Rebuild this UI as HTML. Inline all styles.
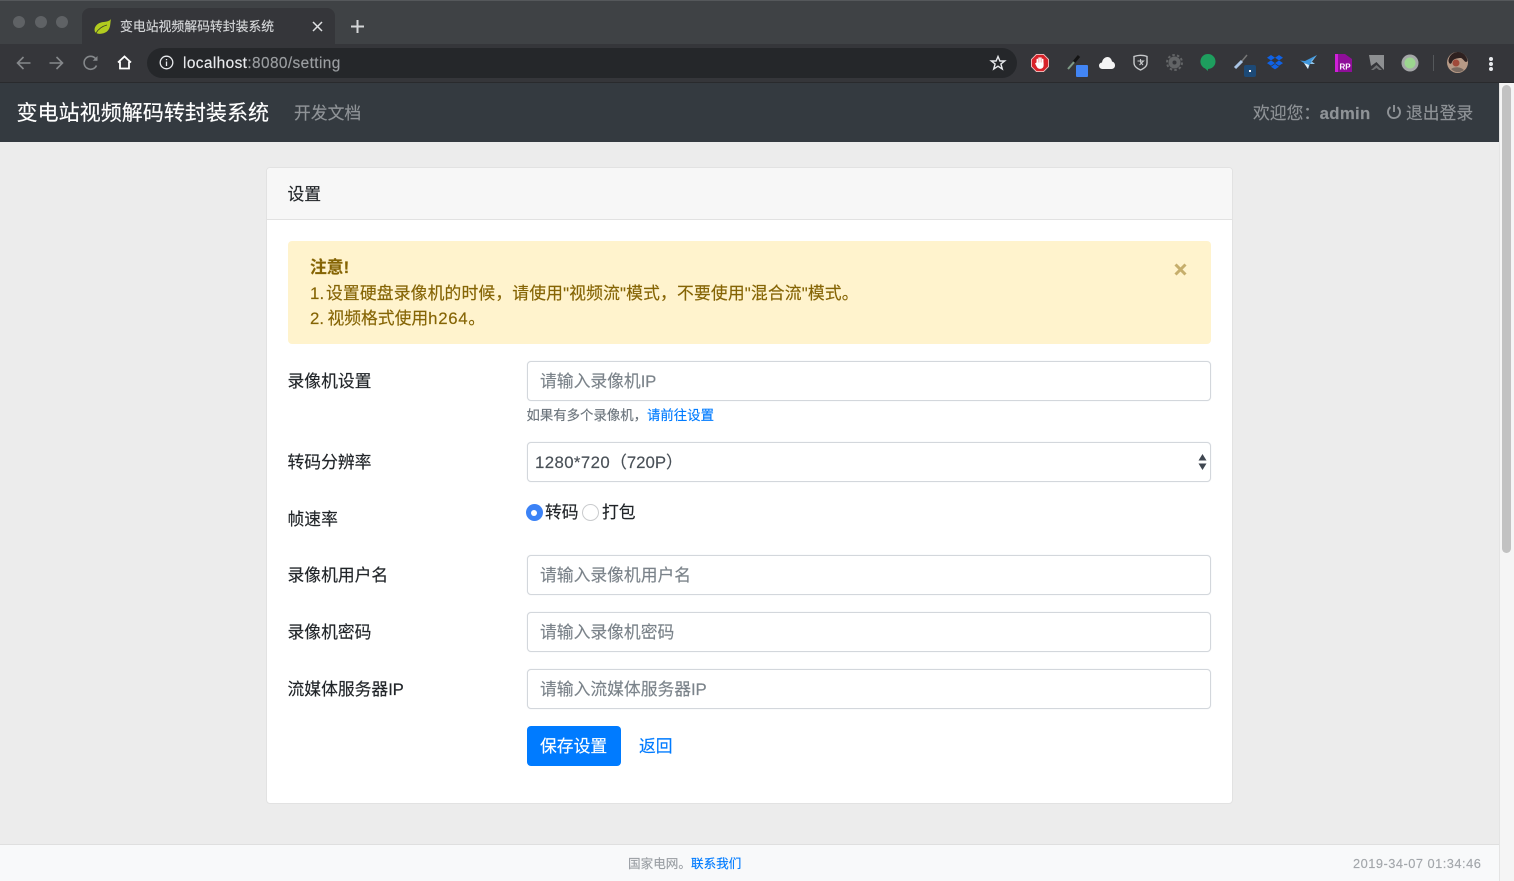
<!DOCTYPE html>
<html lang="zh">
<head>
<meta charset="utf-8">
<title>变电站视频解码转封装系统</title>
<style>
html,body{margin:0;padding:0;width:1514px;height:881px;overflow:hidden;background:#ececec}
body{position:relative;font-family:"Liberation Sans","Noto Sans CJK SC",sans-serif;color:#212529}
.a{position:absolute}
.t{position:absolute;white-space:nowrap;line-height:24px;font-size:16.8px;margin-top:1px;-webkit-text-stroke:.15px currentColor}
.box{position:absolute;left:527px;width:682px;height:38px;background:#fff;border:1px solid #d3d7dc;border-radius:4px;box-shadow:0 0 1px #dfe2e6}
.ph{color:#7b838a;left:540px}
.ip{font-size:16.8px;letter-spacing:-.2px}
svg{position:absolute;overflow:visible}
</style>
</head>
<body>
<!-- browser chrome -->
<div class="a" style="left:0;top:0;width:1514px;height:44px;background:#3f4245;border-top:1px solid #55585b;box-sizing:border-box"></div>
<div class="a" style="left:13px;top:16px;width:12px;height:12px;border-radius:50%;background:#5f6265"></div>
<div class="a" style="left:35px;top:16px;width:12px;height:12px;border-radius:50%;background:#5f6265"></div>
<div class="a" style="left:56px;top:16px;width:12px;height:12px;border-radius:50%;background:#5f6265"></div>
<div class="a" style="left:82px;top:8px;width:253px;height:36px;background:#35363a;border-radius:8px 8px 0 0"></div>
<svg style="left:94px;top:18px" width="18" height="17" viewBox="0 0 18 17"><path d="M17 1C16 5 17 10 13 13.500C9 16.500 3 16.500 1 14C-.5 10 2 6 7 4.500C11 3.500 15 4 17 1Z" fill="#b2cc1f"/><path d="M2 15C5 10 9 8 13 7" stroke="#3a3f2a" stroke-width=".8" fill="none"/></svg>
<div class="t" style="left:120px;top:14px;font-size:12.85px;color:#d5d7d9">变电站视频解码转封装系统</div>
<svg style="left:312px;top:21px" width="11" height="11"><path d="M1 1L10 10M10 1L1 10" stroke="#dfe1e3" stroke-width="1.500"/></svg>
<svg style="left:351px;top:20px" width="13" height="13"><path d="M6.500 0V13M0 6.500H13" stroke="#d4d6d8" stroke-width="2"/></svg>

<div class="a" style="left:0;top:44px;width:1514px;height:39px;background:#35363a;border-bottom:1px solid #292a2d;box-sizing:border-box"></div>
<svg style="left:16px;top:56px" width="15" height="14" fill="none" stroke="#85888b" stroke-width="1.600"><path d="M14.500 7H1.500M7.500 1L1.500 7L7.500 13"/></svg>
<svg style="left:49px;top:56px" width="15" height="14" fill="none" stroke="#85888b" stroke-width="1.600"><path d="M.5 7H13.500M7.500 1L13.500 7L7.500 13"/></svg>
<svg style="left:83px;top:55px" width="16" height="16" fill="none" stroke="#85888b" stroke-width="1.600"><path d="M13.500 10.500A6.500 6.500 0 1 1 12.500 3.500L14 5"/><path d="M14.500 1V5.800H9.700" fill="#85888b" stroke="none"/></svg>
<svg style="left:117px;top:55px" width="15" height="15" fill="none" stroke="#fff" stroke-width="1.800"><path d="M1 7.500L7.500 1.500L14 7.500M3 6.500V13.500H12V6.500"/></svg>
<div class="a" style="left:147px;top:48px;width:870px;height:30px;border-radius:15px;background:#25272a"></div>
<svg style="left:159px;top:55px" width="15" height="15" fill="none" stroke="#e8eaed" stroke-width="1.300"><circle cx="7.500" cy="7.500" r="6.300"/><path d="M7.500 6.500V11M7.500 4V5.200"/></svg>
<div class="t" style="left:183px;top:51px;font-size:15.4px;letter-spacing:.4px;color:#e8eaed">localhost<span style="color:#9b9ea1">:8080/setting</span></div>
<svg style="left:990px;top:55px" width="16" height="16" fill="none" stroke="#e8eaed" stroke-width="1.400"><path d="M8 1.500L9.900 6H14.700L10.900 9L12.300 14L8 11.200L3.700 14L5.100 9L1.300 6H6.100Z"/></svg>

<!-- extensions -->
<svg style="left:1031px;top:54px" width="18" height="18" viewBox="0 0 20 20"><path d="M6 .5H14L19.500 6V14L14 19.500H6L.5 14V6Z" fill="#d8232a" stroke="#f0c4c4"/><path d="M7 10V6M9 10V4.500M11 10V4.500M13 10V6" stroke="#fff" stroke-width="1.700" stroke-linecap="round"/><path d="M6 9.500H14V12.500C14 15 12.500 16.500 10 16.500C8 16.500 6.800 15.500 6 13.500L4.500 10.500Z" fill="#fff"/></svg>
<svg style="left:1066px;top:55px" width="24" height="24"><path d="M2 14L9 6" stroke="#7e9a86" stroke-width="2"/><path d="M8 7L13 1" stroke="#141414" stroke-width="3"/><rect x="10" y="10" width="12" height="12" rx="1" fill="#4285f4"/></svg>
<svg style="left:1099px;top:57px" width="16" height="12"><path d="M3.500 12C1 12 0 10 0 8.500C0 7 1.500 5.500 3 5.500C3.500 2 6 0 8.500 0C11 0 12.500 2 13 4.500C15 5 16 6.500 16 8.500C16 10.500 14.500 12 12.500 12Z" fill="#f4f4f4"/></svg>
<svg style="left:1133px;top:54px" width="15" height="17" fill="none" stroke="#c8cacc" stroke-width="1.400"><path d="M1 2.500C5 1 10 1 14 2.500V9C14 12 11 14.500 7.500 16C4 14.500 1 12 1 9Z"/><path d="M4.500 7H10.500L6.500 11M7.500 5V8L10 11" stroke-width="1.100"/></svg>
<svg style="left:1166px;top:54px" width="17" height="17"><circle cx="8.500" cy="8.500" r="6" fill="#626466"/><circle cx="8.500" cy="8.500" r="7.500" fill="none" stroke="#626466" stroke-width="2" stroke-dasharray="2.500 2.200"/><circle cx="8.500" cy="8.500" r="2" fill="#35363a"/></svg>
<svg style="left:1200px;top:54px" width="16" height="18"><path d="M8 0A7.500 7.500 0 0 1 8 15L8 17L5 14.400A7.500 7.500 0 0 1 8 0Z" fill="#1e9e5e"/></svg>
<svg style="left:1233px;top:55px" width="24" height="24"><path d="M2 13L9 6" stroke="#a9c4e4" stroke-width="3"/><path d="M9 6L14 0" stroke="#777" stroke-width="1.500"/><rect x="11" y="10" width="12" height="12" rx="2" fill="#1d4a77"/><rect x="16" y="15" width="2" height="2" fill="#fff"/></svg>
<svg style="left:1267px;top:55px" width="16" height="15" fill="#0f62e6"><path d="M4 0L8 2.700L4 5.400L0 2.700ZM12 0L16 2.700L12 5.400L8 2.700ZM4 5.400L8 8.100L4 10.800L0 8.100ZM12 5.400L16 8.100L12 10.800L8 8.100ZM4 11.700L8 9L12 11.700L8 14.400Z"/></svg>
<svg style="left:1300px;top:55px" width="18" height="15"><path d="M17 0L9 4L5 6L0 5.500L4 8L8 14L10 9Z" fill="#3f96dc"/><path d="M17 0L10 9L15 9L11 6Z" fill="#8fc6ec"/><path d="M4 8L8 14L9 10Z" fill="#e8f0f4"/></svg>
<svg style="left:1335px;top:54px" width="17" height="18"><path d="M0 0H10L17 5V18H0Z" fill="#8f0f99"/><rect width="3" height="18" fill="#d020d8"/><text x="4.500" y="15.500" font-family="Liberation Sans" font-size="8" font-weight="700" fill="#fff">RP</text></svg>
<svg style="left:1369px;top:55px" width="15" height="15"><path d="M0 0H15V15L7.500 7L2 11Z" fill="#8d8f91"/><path d="M2 15L7.500 10L13 15H10L7.500 13L4.500 15Z" fill="#6f7173"/></svg>
<svg style="left:1401px;top:54px" width="18" height="18"><circle cx="9" cy="9" r="8.500" fill="#a5a7a8"/><circle cx="9" cy="9" r="5.500" fill="#9cd68f"/></svg>
<div class="a" style="left:1433px;top:55px;width:1px;height:16px;background:#55585b"></div>
<svg style="left:1447px;top:52px" width="21" height="21"><circle cx="10.500" cy="10.500" r="10.500" fill="#b79a86"/><path d="M1.500 9C2 2 8 0 11 0C16 0 20 4 20.500 9C18 12 17 7 14 6C10 6 6 7 5 10C4 13 2 12 1.500 9Z" fill="#2e2120"/><circle cx="9" cy="11" r="3.500" fill="#a04a3a"/><path d="M4 17C8 14 14 15 17 18C13 21 8 21 4 17Z" fill="#7a6a60"/></svg>
<div class="a" style="left:1489px;top:57px;width:4px;height:4px;border-radius:50%;background:#e8eaed"></div>
<div class="a" style="left:1489px;top:62px;width:4px;height:4px;border-radius:50%;background:#e8eaed"></div>
<div class="a" style="left:1489px;top:67px;width:4px;height:4px;border-radius:50%;background:#e8eaed"></div>

<!-- navbar -->
<div class="a" style="left:0;top:83px;width:1499px;height:59px;background:#343a40"></div>
<div class="t" style="left:16.500px;top:101px;font-size:21.050px;color:#fff">变电站视频解码转封装系统</div>
<div class="t" style="left:294px;top:101px;color:#8f9397">开发文档</div>
<div class="t" style="left:1253px;top:101px;color:#8f9397">欢迎您：<b style="margin-left:-.5px;letter-spacing:.3px">admin</b></div>
<svg style="left:1386px;top:104px" width="16" height="16" fill="none" stroke="#8f9397" stroke-width="1.900"><path d="M4.500 3.200A6 6 0 1 0 11.500 3.200M8 1V8"/></svg>
<div class="t" style="left:1406px;top:101px;color:#8f9397">退出登录</div>

<!-- scrollbar -->
<div class="a" style="left:1499px;top:83px;width:15px;height:798px;background:#f5f5f5;border-left:1px solid #e4e4e4;box-sizing:border-box"></div>
<div class="a" style="left:1502px;top:85px;width:9px;height:468px;border-radius:5px;background:#c2c2c2"></div>

<!-- card -->
<div class="a" style="left:266px;top:167px;width:965px;height:635px;background:#fff;border:1px solid #e2e2e2;border-radius:4px"></div>
<div class="a" style="left:267px;top:168px;width:965px;height:51px;background:#f7f7f7;border-bottom:1px solid #e2e2e2;border-radius:4px 4px 0 0"></div>
<div class="t" style="left:287.500px;top:182px">设置</div>

<!-- alert -->
<div class="a" style="left:288px;top:241px;width:923px;height:103px;background:#fff3cd;border-radius:4px"></div>
<div class="t" style="left:310px;top:255px;color:#856404;font-weight:700">注意!</div>
<div class="t" style="left:310px;top:281px;color:#856404;letter-spacing:.16px;word-spacing:-3.2px">1. 设置硬盘录像机的时候，请使用"视频流"模式，不要使用"混合流"模式。</div>
<div class="t" style="left:310px;top:306px;color:#856404;word-spacing:-1.200px">2. 视频格式使用<span style="letter-spacing:.7px">h264</span>。</div>
<svg style="left:1174px;top:263px" width="13" height="13"><path d="M1.500 1.500L11.500 11.500M11.500 1.500L1.500 11.500" stroke="#c6ae6c" stroke-width="3"/></svg>

<!-- form -->
<div class="t" style="left:287.500px;top:369px">录像机设置</div>
<div class="box" style="top:361px"></div>
<div class="t ph" style="top:369px">请输入录像机<span class="ip">IP</span></div>
<div class="t" style="left:526.500px;top:403px;font-size:13.400px;color:#6c757d">如果有多个录像机，<span style="color:#007bff">请前往设置</span></div>

<div class="t" style="left:287.500px;top:450px">转码分辨率</div>
<div class="box" style="top:442px"></div>
<div class="t" style="left:535px;top:450px;color:#495057"><span style="letter-spacing:.4px">1280*720</span>（720P）</div>
<svg style="left:1198px;top:454px" width="9" height="16" fill="#3f4650"><path d="M4.500 0L8.500 6.500H.5ZM.5 9.500H8.500L4.500 16Z"/></svg>

<div class="t" style="left:287.500px;top:507px">帧速率</div>
<div class="a" style="left:525.500px;top:504px;width:17px;height:17px;border-radius:50%;background:#3b82f6"></div>
<div class="a" style="left:531px;top:509.500px;width:6px;height:6px;border-radius:50%;background:#fff"></div>
<div class="t" style="left:545px;top:500px">转码</div>
<div class="a" style="left:582px;top:504px;width:15px;height:15px;border-radius:50%;background:#fff;border:1px solid #c9cbcd"></div>
<div class="t" style="left:602px;top:500px">打包</div>

<div class="t" style="left:287.500px;top:563px">录像机用户名</div>
<div class="box" style="top:555px"></div>
<div class="t ph" style="top:563px">请输入录像机用户名</div>

<div class="t" style="left:287.500px;top:620px">录像机密码</div>
<div class="box" style="top:612px"></div>
<div class="t ph" style="top:620px">请输入录像机密码</div>

<div class="t" style="left:287.500px;top:677px">流媒体服务器<span class="ip">IP</span></div>
<div class="box" style="top:669px"></div>
<div class="t ph" style="top:677px">请输入流媒体服务器<span class="ip">IP</span></div>

<div class="a" style="left:527px;top:726px;width:94px;height:40px;background:#007bff;border-radius:4px"></div>
<div class="t" style="left:540px;top:734px;color:#fff">保存设置</div>
<div class="t" style="left:639px;top:734px;color:#007bff">返回</div>

<!-- footer -->
<div class="a" style="left:0;top:844px;width:1499px;height:37px;background:#f8f9fa;border-top:1px solid #dfdfdf;box-sizing:border-box"></div>
<div class="t" style="left:628px;top:851px;font-size:12.600px;color:#9a9fa4">国家电网。<span style="color:#007bff">联系我们</span></div>
<div class="t" style="left:1353px;top:851px;font-size:12.800px;letter-spacing:.5px;color:#a3a7ab">2019-34-07 01:34:46</div>
</body>
</html>
